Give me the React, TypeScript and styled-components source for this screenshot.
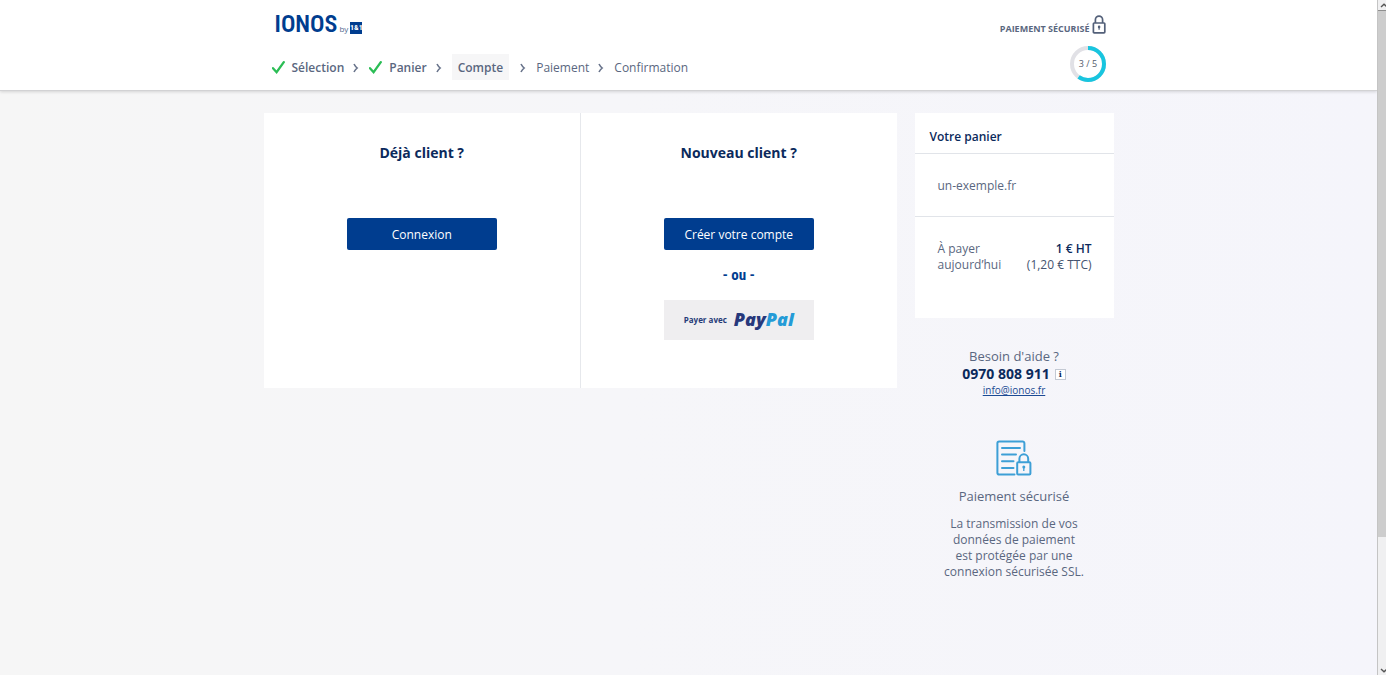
import React from "react";
import styled, { createGlobalStyle, css } from "styled-components";

const navy = "#0b2a5c";
const blue = "#003d8f";
const slate = "#5a6780";
const rule = "#e1e4e9";

const GlobalStyle = createGlobalStyle`
  *, *::before, *::after { box-sizing: border-box; }
  body {
    margin: 0;
    font-family: "Open Sans", "Noto Sans", sans-serif;
    font-size: 12px;
    line-height: 16px;
    color: ${slate};
  }
  h1, h2, p, ol, dl, dd { margin: 0; padding: 0; }
`;

const Window = styled.div`
  display: flex;
  min-height: 100vh;
`;

const Page = styled.div`
  flex: 1;
  min-width: 0;
  background: linear-gradient(90deg, #f6f6f6, #f6f6f9 45%, #f5f5fb);
`;

const Header = styled.header`
  height: 91px;
  background: #fff;
  border-bottom: 1px solid #d2d2d4;
  box-shadow: 0 1px 3px rgba(0, 0, 0, 0.14);
`;

const Container = styled.div`
  width: 100%;
  max-width: 850px;
  margin: 0 auto;
`;

const HeaderInner = styled(Container)`
  display: flex;
  justify-content: space-between;
  padding: 12px 8px 0;
`;

const HeaderRight = styled.div`
  display: flex;
  flex-direction: column;
  align-items: flex-end;
  gap: 12px;
`;

const Logo = styled.a`
  display: flex;
  align-items: flex-end;
  gap: 2px;
  height: 24px;
  padding-left: 3px;
  color: ${blue};
  text-decoration: none;
`;

const LogoName = styled.span`
  font-family: "Roboto Condensed", Roboto, sans-serif;
  font-size: 24px;
  line-height: 24px;
  font-weight: 600;
`;

const LogoBy = styled.span`
  font-size: 8px;
  line-height: 14px;
  color: #51688f;
`;

const LogoMark = styled.span`
  display: flex;
  justify-content: center;
  width: 12px;
  height: 12px;
  margin-bottom: 2px;
  background: ${blue};
  color: #fff;
  font-family: "Roboto Condensed", Roboto, sans-serif;
  font-size: 8px;
  line-height: 12px;
  font-weight: 700;
`;

const Steps = styled.ol`
  display: flex;
  align-items: center;
  margin-top: 18px;
  list-style: none;
`;

const Step = styled.li<{ $state: "done" | "current" | "next" }>`
  display: flex;
  align-items: center;
  height: 26px;
  padding-top: 1px;
  font-weight: ${(p) => (p.$state === "next" ? 400 : 600)};
  ${(p) =>
    p.$state === "current" &&
    css`
      padding: 1px 6px 0;
      background: #f6f6f7;
    `}
  svg {
    margin-right: 7px;
  }
`;

const Separator = styled.li<{ $wide?: boolean }>`
  display: flex;
  padding: 1px 9px 0 ${(p) => (p.$wide ? 10 : 8)}px;
`;

const Secure = styled.div`
  display: flex;
  align-items: flex-end;
  gap: 2px;
  height: 22px;
  font-size: 9px;
  line-height: 11px;
  font-weight: 700;
`;

const Main = styled(Container)`
  display: grid;
  grid-template-columns: minmax(0, 1fr) 199px;
  gap: 18px;
  align-items: start;
  padding: 22px 0 40px;
`;

const Accounts = styled.div`
  display: grid;
  grid-template-columns: 1fr 1fr;
  min-height: 275px;
  background: #fff;
`;

const Account = styled.section`
  display: flex;
  flex-direction: column;
  align-items: center;
  padding: 28px 0;
  & + & {
    border-left: 1px solid #e6e8ec;
  }
`;

const Title = styled.h1`
  font-size: 14px;
  line-height: 24px;
  font-weight: 700;
  color: ${navy};
`;

const PrimaryButton = styled.button`
  width: 150px;
  height: 32px;
  margin-top: 53px;
  padding: 2px 0 0;
  border: 0;
  border-radius: 2px;
  background: ${blue};
  color: #fff;
  font: 400 12px/16px "Open Sans", "Noto Sans", sans-serif;
`;

const Or = styled.p`
  margin: 13px 0;
  font-family: "Roboto Condensed", Roboto, sans-serif;
  font-size: 15px;
  line-height: 24px;
  font-weight: 700;
  color: ${blue};
`;

const PayPalButton = styled.button`
  display: flex;
  align-items: center;
  justify-content: center;
  gap: 7px;
  width: 150px;
  height: 40px;
  padding: 0;
  border: 0;
  background: #efeef0;
  color: #263b78;
  font: 700 8px/16px "Open Sans", "Noto Sans", sans-serif;
`;

const PayPalName = styled.span`
  padding-bottom: 2px;
  font: italic 800 18px/20px "Open Sans", sans-serif;
  color: #27387c;
  span {
    color: #249bd7;
  }
`;

const Cart = styled.section`
  min-height: 205px;
  background: #fff;
`;

const CartTitle = styled.h2`
  padding: 16px 15px 8px;
  border-bottom: 1px solid ${rule};
  font-size: 12px;
  line-height: 16px;
  font-weight: 600;
  color: ${navy};
`;

const CartItem = styled.p`
  padding: 24px 23px 22px;
  border-bottom: 1px solid ${rule};
`;

const Total = styled.dl`
  display: flex;
  justify-content: space-between;
  padding: 24px 22px 22px 23px;
`;

const Amount = styled.dd`
  text-align: right;
  white-space: nowrap;
  color: #46546f;
  strong {
    display: block;
    font-weight: 600;
    color: ${navy};
  }
`;

const Help = styled.section`
  display: flex;
  flex-direction: column;
  align-items: center;
  padding-top: 29px;
  font-size: 13px;
  line-height: 18px;
`;

const Phone = styled.p`
  display: flex;
  align-items: center;
  gap: 5px;
  font-size: 14px;
  font-weight: 700;
  color: ${navy};
`;

const InfoButton = styled.button`
  width: 11px;
  height: 11px;
  padding: 0;
  border: 1px solid #c3c9d3;
  background: #fff;
  color: ${navy};
  font: 700 8px/9px "DejaVu Serif", serif;
`;

const Mail = styled.a`
  font-size: 10px;
  line-height: 14px;
  color: #1b4a94;
`;

const Safety = styled.section`
  display: flex;
  flex-direction: column;
  align-items: center;
  padding-top: 43px;
  text-align: center;
  h2 {
    margin: 10px 0;
    font-size: 13px;
    line-height: 20px;
    font-weight: 400;
  }
`;

const ScrollBar = styled.div`
  display: flex;
  flex-direction: column;
  width: 9px;
  border-left: 1px solid #c4c4c4;
  background: #f0f0f1;
`;

const ScrollArrow = styled.div`
  display: flex;
  justify-content: flex-end;
  align-items: center;
  height: 10px;
`;

const Track = styled.div`
  flex: 1;
`;

const Thumb = styled.div`
  height: 80.5%;
  border-top: 1px solid #8f8f8f;
  background: #cdcdcd;
`;

const Check = () => (
  <svg width="13" height="13" viewBox="0 0 13 13" fill="none" aria-hidden="true">
    <path d="M1 7.2 4.6 11.2 11.8 1.2" stroke="#2bbd55" strokeWidth="2.3" strokeLinecap="round" />
  </svg>
);

const Chevron = () => (
  <svg width="8" height="10" viewBox="0 0 8 10" fill="none" aria-hidden="true">
    <path d="M2 1C2.9 2.8 4 4 5.2 5 4 6 2.9 7.2 2 9" stroke="#67728a" strokeWidth="1.6" />
  </svg>
);

const LockIcon = () => (
  <svg width="14" height="19" viewBox="0 0 14 19" fill="none" stroke="#536079" aria-hidden="true">
    <rect x="1.4" y="8" width="11.4" height="9.8" rx="0.8" strokeWidth="1.7" />
    <path d="M3.4 8V4.7a3.6 3.6 0 0 1 7.2 0V8" strokeWidth="1.7" />
    <circle cx="7.1" cy="11.9" r="1.3" fill="#536079" stroke="none" />
    <path d="M7.1 12v2.8" strokeWidth="1.2" />
  </svg>
);

const Progress = () => (
  <svg width="36" height="36" viewBox="0 0 36 36" role="img" aria-label="Étape 3 sur 5">
    <circle cx="18" cy="18" r="16" fill="none" stroke="#e1e1e6" strokeWidth="4" />
    <circle
      cx="18"
      cy="18"
      r="16"
      fill="none"
      stroke="#18c5df"
      strokeWidth="4"
      pathLength="5"
      strokeDasharray="3 2"
      transform="rotate(-90 18 18)"
    />
    <text x="18" y="21" textAnchor="middle" fontSize="9" fill="#555d6c">
      3 / 5
    </text>
  </svg>
);

const SecureDocument = () => (
  <svg width="36" height="36" viewBox="0 0 36 36" fill="none" stroke="#3d9fd6" strokeWidth="2" aria-hidden="true">
    <path d="M18.5 34.6H3.2A1.8 1.8 0 0 1 1.4 32.8V3.2A1.8 1.8 0 0 1 3.2 1.4H26.6a1.8 1.8 0 0 1 1.8 1.8V11" strokeLinecap="round" />
    <path d="M6 8H24M6 14.6H20M6 21.2H17.5M6 27.9H17.5" strokeLinecap="round" />
    <rect x="21.2" y="22.3" width="13.2" height="12.2" rx="1" />
    <path d="M23.4 22.3V18.7a4.4 4.4 0 0 1 8.8 0V22.3" />
    <circle cx="27.8" cy="27" r="1.5" fill="#3d9fd6" stroke="none" />
    <path d="M27.8 27V31" strokeWidth="1.3" />
  </svg>
);

export default function App() {
  return (
    <>
      <GlobalStyle />
      <Window>
        <Page>
          <Header>
            <HeaderInner>
              <div>
                <Logo href="#">
                  <LogoName>IONOS</LogoName>
                  <LogoBy>by</LogoBy>
                  <LogoMark>1&1</LogoMark>
                </Logo>
                <Steps>
                  <Step $state="done">
                    <Check />
                    Sélection
                  </Step>
                  <Separator>
                    <Chevron />
                  </Separator>
                  <Step $state="done">
                    <Check />
                    Panier
                  </Step>
                  <Separator>
                    <Chevron />
                  </Separator>
                  <Step $state="current" aria-current="step">
                    Compte
                  </Step>
                  <Separator $wide>
                    <Chevron />
                  </Separator>
                  <Step $state="next">Paiement</Step>
                  <Separator>
                    <Chevron />
                  </Separator>
                  <Step $state="next">Confirmation</Step>
                </Steps>
              </div>
              <HeaderRight>
                <Secure>
                  PAIEMENT SÉCURISÉ
                  <LockIcon />
                </Secure>
                <Progress />
              </HeaderRight>
            </HeaderInner>
          </Header>
          <Main as="main">
            <Accounts>
              <Account>
                <Title>Déjà client ?</Title>
                <PrimaryButton type="button">Connexion</PrimaryButton>
              </Account>
              <Account>
                <Title>Nouveau client ?</Title>
                <PrimaryButton type="button">Créer votre compte</PrimaryButton>
                <Or>- ou -</Or>
                <PayPalButton type="button">
                  Payer avec
                  <PayPalName>
                    Pay<span>Pal</span>
                  </PayPalName>
                </PayPalButton>
              </Account>
            </Accounts>
            <aside>
              <Cart>
                <CartTitle>Votre panier</CartTitle>
                <CartItem>un-exemple.fr</CartItem>
                <Total>
                  <dt>
                    À payer
                    <br />
                    aujourd’hui
                  </dt>
                  <Amount>
                    <strong>1 € HT</strong>
                    (1,20 € TTC)
                  </Amount>
                </Total>
              </Cart>
              <Help>
                <p>Besoin d'aide ?</p>
                <Phone>
                  0970 808 911
                  <InfoButton type="button">i</InfoButton>
                </Phone>
                <Mail href="mailto:info@ionos.fr">info@ionos.fr</Mail>
              </Help>
              <Safety>
                <SecureDocument />
                <h2>Paiement sécurisé</h2>
                <p>
                  La transmission de vos
                  <br />
                  données de paiement
                  <br />
                  est protégée par une
                  <br />
                  connexion sécurisée SSL.
                </p>
              </Safety>
            </aside>
          </Main>
        </Page>
        <ScrollBar aria-hidden="true">
          <ScrollArrow>
            <svg width="6" height="5" viewBox="0 0 6 5" fill="none">
              <path d="M1 4 4 1.2 7 4" stroke="#555" strokeWidth="1.4" />
            </svg>
          </ScrollArrow>
          <Track>
            <Thumb />
          </Track>
          <ScrollArrow>
            <svg width="6" height="5" viewBox="0 0 6 5" fill="none">
              <path d="M1 1 4 3.8 7 1" stroke="#555" strokeWidth="1.4" />
            </svg>
          </ScrollArrow>
        </ScrollBar>
      </Window>
    </>
  );
}
